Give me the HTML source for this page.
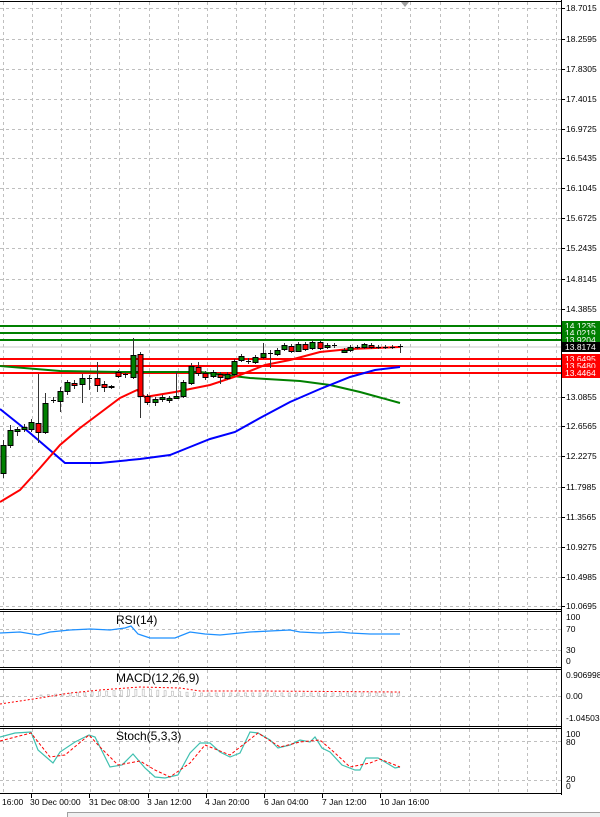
<!DOCTYPE html>
<html><head><meta charset="utf-8">
<style>
html,body{margin:0;padding:0;background:#fff;}
svg{display:block;font-family:"Liberation Sans",sans-serif;}
</style></head>
<body>
<svg id="s" width="600" height="817" viewBox="0 0 600 817" xmlns="http://www.w3.org/2000/svg">
<rect width="600" height="817" fill="#fff"/>
<g id="grid" stroke="#bfbfbf" stroke-dasharray="3,3" stroke-width="1"></g>
<g id="hl"></g>
<g id="ma" fill="none" stroke-width="2">
<polyline stroke="#008000" points="0,366 60,371 120,372 200,372 250,378 300,381 330,385 360,392 400,403"/>
<polyline stroke="#0000ff" points="0,409 30,433 65,463 100,463 140,459 170,455 190,447 210,439 235,432 260,418 290,402 320,389 350,377 375,370 400,367"/>
<polyline stroke="#ff0000" points="0,502 20,490 40,468 60,445 80,428 100,413 120,398 137,390 145,397 175,392 210,385 240,375 265,365 290,360 320,352 350,349 375,348 400,347"/>
</g>
<g id="cd"></g>
<g id="ind" fill="none"></g>
<g id="ax" font-size="8.5" fill="#000"></g>
<g stroke="#000" stroke-width="1" fill="none">
<line x1="561.5" y1="0" x2="561.5" y2="795"/>
<line x1="0" y1="1.5" x2="562" y2="1.5"/>
<line x1="0" y1="609.5" x2="562" y2="609.5"/>
<line x1="0" y1="611.5" x2="562" y2="611.5"/>
<line x1="0" y1="667.5" x2="562" y2="667.5"/>
<line x1="0" y1="669.5" x2="562" y2="669.5"/>
<line x1="0" y1="726.5" x2="562" y2="726.5"/>
<line x1="0" y1="728.5" x2="562" y2="728.5"/>
<line x1="0" y1="793.5" x2="562" y2="793.5"/>
</g>
<polygon points="401,2 409,2 405,7" fill="#a0a0a0"/>
<rect x="67.5" y="812.5" width="540" height="10" fill="#f0f0f0" stroke="#a0a0a0"/>
</svg>
<script>
var NS="http://www.w3.org/2000/svg";
function el(p,t,a,txt){var e=document.createElementNS(NS,t);for(var k in a)e.setAttribute(k,a[k]);if(txt!=null)e.textContent=txt;p.appendChild(e);return e;}
var G=document.getElementById('grid');
for(var x=3;x<561;x+=29.1){var xx=Math.round(x)+0.5;
 el(G,'line',{x1:xx,y1:2,x2:xx,y2:609});el(G,'line',{x1:xx,y1:612,x2:xx,y2:667});
 el(G,'line',{x1:xx,y1:670,x2:xx,y2:726});el(G,'line',{x1:xx,y1:729,x2:xx,y2:793});}
var prices=["18.7015","18.2595","17.8305","17.4015","16.9725","16.5435","16.1045","15.6725","15.2435","14.8145","14.3855","13.0855","12.6565","12.2275","11.7985","11.3565","10.9275","10.4985","10.0695"];
var py=[8,39,69,99,129,158,188,218,248,279,309,397,426,456,487,517,547,577,606];
var A=document.getElementById('ax');
for(var i=0;i<py.length;i++){var y=py[i]+0.5;el(G,'line',{x1:0,y1:y,x2:561,y2:y});
 el(A,'line',{x1:561,y1:y,x2:565,y2:y,stroke:'#000'});el(A,'text',{x:566,y:py[i]+3},prices[i]);}
[[629,'70'],[650,'30']].forEach(function(v){el(G,'line',{x1:0,y1:v[0]+.5,x2:561,y2:v[0]+.5});});
[[696,'']].forEach(function(v){el(G,'line',{x1:0,y1:v[0]+.5,x2:561,y2:v[0]+.5});});
[[741],[780]].forEach(function(v){el(G,'line',{x1:0,y1:v[0]+.5,x2:561,y2:v[0]+.5});});
[[617,'100'],[629,'70'],[650,'30'],[661,'0'],[675,'0.906998'],[696,'0.00'],[718,'-1.04503'],[734,'100'],[742,'80'],[779,'20'],[786,'0']].forEach(function(v){el(A,'text',{x:566,y:v[0]+3},v[1]);});
// horizontal lines
var H=document.getElementById('hl');
[[326,'#008000','14.1235'],[333,'#008000','14.0219'],[340,'#008000','13.9204'],[359,'#ff0000','13.6495'],[366,'#ff0000','13.5480'],[373,'#ff0000','13.4464']].forEach(function(v){
 el(H,'line',{x1:0,y1:v[0],x2:561,y2:v[0],stroke:v[1],'stroke-width':2});
 el(H,'line',{x1:0,y1:v[0]+1.5,x2:561,y2:v[0]+1.5,stroke:'#fff','stroke-width':0.6,opacity:0.5});});
el(H,'line',{x1:0,y1:347,x2:561,y2:347,stroke:'#c8c8c8','stroke-width':1});
[[326,'#008000','14.1235'],[333,'#008000','14.0219'],[340,'#008000','13.9204'],[347,'#000','13.8174'],[359,'#ff0000','13.6495'],[366,'#ff0000','13.5480'],[373,'#ff0000','13.4464']].forEach(function(v){
 el(A,'rect',{x:562,y:v[0]-5,width:38,height:10,fill:v[1]});
 el(A,'text',{x:565,y:v[0]+3,fill:'#fff'},v[2]);});
// candles [x,open,close,high,low]
var C=[[3,473,445,440,478],[10,445,430,425,448],[17,431,429,427,436],[24,429,427,424,432],[31,429,422,419,432],[38,423,432,374,443],[45,432,403,393,434],[53,400,400,397,403],[60,401,391,387,412],[67,391,382,380,395],[74,383,385,380,389],[82,384,378,374,403],[89,378,378,375,390],[97,378,385,362,392],[104,384,387,381,392],[111,386,387,385,389],[118,372,376,370,378],[125,374,374,372,378],[133,377,355,338,379],[140,354,396,352,418],[147,396,402,394,405],[155,402,399,397,406],[162,399,397,395,402],[169,400,398,396,403],[176,398,396,371,399],[183,396,382,380,398],[191,383,366,363,385],[198,367,373,362,376],[205,373,377,371,380],[213,376,372,370,378],[220,374,377,372,384],[227,378,374,372,380],[234,374,361,359,376],[241,360,356,354,362],[248,361,361,358,364],[255,362,357,355,364],[263,357,353,343,359],[270,353,353,350,368],[277,354,350,348,356],[284,349,345,343,351],[291,346,351,344,353],[298,351,344,342,352],[305,344,349,342,351],[312,348,342,340,350],[320,342,348,340,350],[327,347,345,343,349],[334,345,345,343,348],[344,352,350,348,353],[350,350,347,345,352],[357,347,347,345,349],[364,347,344,343,349],[371,345,347,343,349],[378,347,347,345,349],[385,347,347,345,349],[392,347,347,345,349],[400,346,346,344,353]];
var D=document.getElementById('cd');
C.forEach(function(c){var x=c[0];
 el(D,'line',{x1:x+.5,y1:c[3],x2:x+.5,y2:c[4],stroke:'#333','stroke-width':1});
 var t=Math.min(c[1],c[2]),b=Math.max(c[1],c[2]);
 if(b-t<1){el(D,'line',{x1:x-2,y1:t+.5,x2:x+3,y2:t+.5,stroke:'#000'});}
 else el(D,'rect',{x:x-2,y:t+.5,width:5,height:b-t,fill:c[2]<c[1]?'#008000':'#ff0000',stroke:'#000','stroke-width':1});});
// indicators
var I=document.getElementById('ind');
el(I,'polyline',{stroke:'#1e90ff','stroke-width':1.3,points:'0,633 20,632 38,635 50,632 70,630 90,629 110,630 125,628 131,626 138,634 150,638 175,638 190,632 205,634 220,635 240,633 250,632 270,631 290,630 300,632 320,633 340,632 350,633 370,634 385,634 400,634'});
el(I,'text',{x:116,y:624,fill:'#000','font-size':12},'RSI(14)');
for(var x=40;x<=400;x+=7.3){var h=x<140?(x-40)*0.06+1:(x<200?7-(x-140)*0.07:3);el(I,'rect',{x:x,y:696-h,width:2,height:h,fill:'none',stroke:'#c0c0c0','stroke-width':0.7});}
el(I,'polyline',{stroke:'#ff0000','stroke-width':1,'stroke-dasharray':'2,2',points:'0,704 20,701 40,698 70,693 100,690 140,687 180,688 200,691 260,691 400,692'});
el(I,'text',{x:116,y:682,fill:'#000','font-size':12},'MACD(12,26,9)');
el(I,'polyline',{stroke:'#40c0b0','stroke-width':1.2,points:'0,737 15,733 31,732 38,750 53,763 60,752 75,742 89,735 95,737 110,767 122,765 133,754 145,768 155,777 165,778 178,775 190,753 200,743 210,743 220,752 230,757 240,753 250,732 258,733 270,740 278,748 290,745 300,740 310,742 315,737 322,748 330,752 342,765 355,770 360,770 366,758 378,758 385,762 395,768 400,767'});
el(I,'polyline',{stroke:'#ff0000','stroke-width':1,'stroke-dasharray':'3,2',points:'0,741 31,733 50,757 65,755 89,735 100,747 118,765 140,761 155,770 170,777 190,763 205,745 230,755 258,733 280,747 300,742 320,740 335,753 350,767 370,763 380,759 400,767'});
el(I,'text',{x:116,y:740,fill:'#000','font-size':12},'Stoch(5,3,3)');
[[2,'16:00',null],[30,'30 Dec 00:00',31],[89,'31 Dec 08:00',89],[147,'3 Jan 12:00',148],[205,'4 Jan 20:00',206],[264,'6 Jan 04:00',264],[322,'7 Jan 12:00',322],[380,'10 Jan 16:00',380]].forEach(function(v){
 if(v[2]!=null)el(A,'line',{x1:v[2]+.5,y1:794,x2:v[2]+.5,y2:798,stroke:'#000'});
 el(A,'text',{x:v[0],y:805},v[1]);});
</script>
</body></html>
